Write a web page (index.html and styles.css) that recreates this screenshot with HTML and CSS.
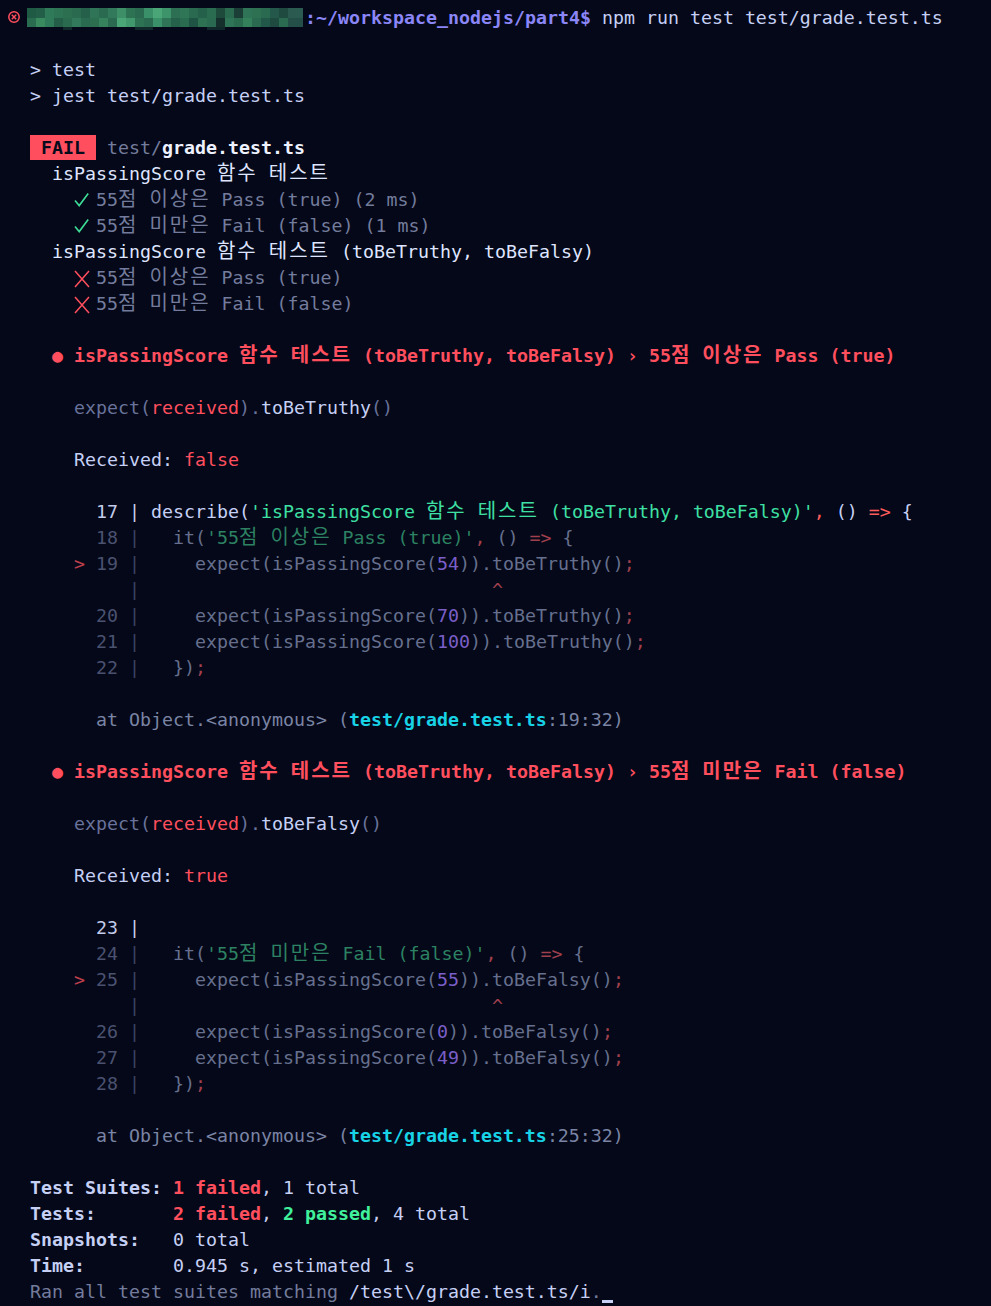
FILE: index.html
```html
<!DOCTYPE html>
<html lang="ko">
<head>
<meta charset="utf-8">
<title>jest</title>
<link rel="stylesheet" href="styles.css">
</head>
<body>
<div class="term">
<div class="ln"><span class="err"><svg width="14" height="14" viewBox="0 0 14 14"><circle cx="6" cy="7" r="5.2" fill="none" stroke="#ff4f5e" stroke-width="1.5"/><path d="M3.8 4.8 L8.2 9.2 M8.2 4.8 L3.8 9.2" stroke="#ff4f5e" stroke-width="1.4"/></svg></span><span class="blur"></span><span class="path">:~/workspace_nodejs/part4$</span> npm run test test/grade.test.ts</div>
<div class="ln"></div>
<div class="ln">  &gt; test</div>
<div class="ln">  &gt; jest test/grade.test.ts</div>
<div class="ln"></div>
<div class="ln">  <span class="badge"> FAIL </span> <span class="g1">test/</span><span class="b w">grade.test.ts</span></div>
<div class="ln">    <span class="desc">isPassingScore <span class="k">함수</span> <span class="k">테스트</span></span></div>
<div class="ln">      <span class="ico"><svg width="16" height="16" viewBox="0 0 16 16"><path d="M1 8.6 L5.2 13.6 L14.2 1.6" fill="none" stroke="#3ddc97" stroke-width="1.6"/></svg></span><span class="g1">55<span class="k">점</span> <span class="k">이상은</span> Pass (true) (2 ms)</span></div>
<div class="ln">      <span class="ico"><svg width="16" height="16" viewBox="0 0 16 16"><path d="M1 8.6 L5.2 13.6 L14.2 1.6" fill="none" stroke="#3ddc97" stroke-width="1.6"/></svg></span><span class="g1">55<span class="k">점</span> <span class="k">미만은</span> Fail (false) (1 ms)</span></div>
<div class="ln">    <span class="desc">isPassingScore <span class="k">함수</span> <span class="k">테스트</span> (toBeTruthy, toBeFalsy)</span></div>
<div class="ln">      <span class="ico"><svg width="16" height="18" viewBox="0 0 16 18"><path d="M1 1 L15 17 M15 1 L1 17" fill="none" stroke="#ff4f5e" stroke-width="1.5"/></svg></span><span class="g1">55<span class="k">점</span> <span class="k">이상은</span> Pass (true)</span></div>
<div class="ln">      <span class="ico"><svg width="16" height="18" viewBox="0 0 16 18"><path d="M1 1 L15 17 M15 1 L1 17" fill="none" stroke="#ff4f5e" stroke-width="1.5"/></svg></span><span class="g1">55<span class="k">점</span> <span class="k">미만은</span> Fail (false)</span></div>
<div class="ln"></div>
<div class="ln">    <span class="red b">● isPassingScore <span class="k">함수</span> <span class="k">테스트</span> (toBeTruthy, toBeFalsy) › 55<span class="k">점</span> <span class="k">이상은</span> Pass (true)</span></div>
<div class="ln"></div>
<div class="ln">      <span class="ed">expect(</span><span class="red">received</span><span class="ed">).</span>toBeTruthy<span class="ed">()</span></div>
<div class="ln"></div>
<div class="ln">      Received: <span class="red">false</span></div>
<div class="ln"></div>
<div class="ln">        <span class="nb">17 |</span> describe(<span class="cg">'isPassingScore <span class="k">함수</span> <span class="k">테스트</span> (toBeTruthy, toBeFalsy)'</span><span class="or">,</span> () <span class="or">=&gt;</span> {</div>
<div class="ln">        <span class="nd">18</span> <span class="bar">|</span> <span class="cd">  it(</span><span class="cs">'55<span class="k">점</span> <span class="k">이상은</span> Pass (true)'</span><span class="cr">,</span><span class="cd"> () </span><span class="cr">=&gt;</span><span class="cd"> {</span></div>
<div class="ln">      <span class="mk">&gt;</span> <span class="nd">19</span> <span class="bar">|</span> <span class="cd">    expect(isPassingScore(</span><span class="cn">54</span><span class="cd">)).toBeTruthy()</span><span class="cr">;</span></div>
<div class="ln">           <span class="bar">|</span>                                <span class="cr">^</span></div>
<div class="ln">        <span class="nd">20</span> <span class="bar">|</span> <span class="cd">    expect(isPassingScore(</span><span class="cn">70</span><span class="cd">)).toBeTruthy()</span><span class="cr">;</span></div>
<div class="ln">        <span class="nd">21</span> <span class="bar">|</span> <span class="cd">    expect(isPassingScore(</span><span class="cn">100</span><span class="cd">)).toBeTruthy()</span><span class="cr">;</span></div>
<div class="ln">        <span class="nd">22</span> <span class="bar">|</span> <span class="cd">  })</span><span class="cr">;</span></div>
<div class="ln"></div>
<div class="ln">        <span class="at">at Object.&lt;anonymous&gt; (</span><span class="cy">test/grade.test.ts</span><span class="at">:19:32)</span></div>
<div class="ln"></div>
<div class="ln">    <span class="red b">● isPassingScore <span class="k">함수</span> <span class="k">테스트</span> (toBeTruthy, toBeFalsy) › 55<span class="k">점</span> <span class="k">미만은</span> Fail (false)</span></div>
<div class="ln"></div>
<div class="ln">      <span class="ed">expect(</span><span class="red">received</span><span class="ed">).</span>toBeFalsy<span class="ed">()</span></div>
<div class="ln"></div>
<div class="ln">      Received: <span class="red">true</span></div>
<div class="ln"></div>
<div class="ln">        <span class="nb">23 |</span></div>
<div class="ln">        <span class="nd">24</span> <span class="bar">|</span> <span class="cd">  it(</span><span class="cs">'55<span class="k">점</span> <span class="k">미만은</span> Fail (false)'</span><span class="cr">,</span><span class="cd"> () </span><span class="cr">=&gt;</span><span class="cd"> {</span></div>
<div class="ln">      <span class="mk">&gt;</span> <span class="nd">25</span> <span class="bar">|</span> <span class="cd">    expect(isPassingScore(</span><span class="cn">55</span><span class="cd">)).toBeFalsy()</span><span class="cr">;</span></div>
<div class="ln">           <span class="bar">|</span>                                <span class="cr">^</span></div>
<div class="ln">        <span class="nd">26</span> <span class="bar">|</span> <span class="cd">    expect(isPassingScore(</span><span class="cn">0</span><span class="cd">)).toBeFalsy()</span><span class="cr">;</span></div>
<div class="ln">        <span class="nd">27</span> <span class="bar">|</span> <span class="cd">    expect(isPassingScore(</span><span class="cn">49</span><span class="cd">)).toBeFalsy()</span><span class="cr">;</span></div>
<div class="ln">        <span class="nd">28</span> <span class="bar">|</span> <span class="cd">  })</span><span class="cr">;</span></div>
<div class="ln"></div>
<div class="ln">        <span class="at">at Object.&lt;anonymous&gt; (</span><span class="cy">test/grade.test.ts</span><span class="at">:25:32)</span></div>
<div class="ln"></div>
<div class="ln">  <span class="b">Test Suites:</span> <span class="red b">1 failed</span>, 1 total</div>
<div class="ln">  <span class="b">Tests:</span>       <span class="red b">2 failed</span>, <span class="grn b">2 passed</span>, 4 total</div>
<div class="ln">  <span class="b">Snapshots:</span>   0 total</div>
<div class="ln">  <span class="b">Time:</span>        0.945 s, estimated 1 s</div>
<div class="ln">  <span class="g1">Ran all test suites matching </span>/test\/grade.test.ts/i<span class="g1">.</span><span class="cursor"></span></div>
</div>
</body>
</html>
```

FILE: styles.css
```css
html, body {
  margin: 0;
  background: #050818;
}

.term {
  padding: 5px 8px 0;
  height: 1301px;
  overflow: hidden;
  font-family: "DejaVu Sans Mono", "Noto Sans CJK KR", monospace;
  font-size: 18.27px;
  line-height: 26px;
  color: #c6d0f5;
}

.ln {
  height: 26px;
  white-space: pre;
}

.k {
  font-size: 20px;
  letter-spacing: 2px;
  line-height: 20px;
}

.b { font-weight: bold; }
.w { color: #eef1ff; }
.g1 { color: #737c9c; }
.desc { color: #dfe5ff; }
.red { color: #ff4f5e; }
.grn { color: #40f09c; }

.path {
  color: #8a86f7;
  font-weight: bold;
}

.err {
  display: inline-block;
  width: 19px;
  height: 26px;
  vertical-align: top;
}
.err svg {
  display: block;
  margin-top: 5px;
}

.blur {
  display: inline-block;
  width: 276px;
  height: 22px;
  margin-top: 3px;
  margin-right: 2px;
  vertical-align: top;
  background:
    linear-gradient(90deg,
      #1f5a44 0 9px, #235e48 9px 18px, #2f7a58 18px 27px, #2d7454 27px 36px,
      #2c6e50 36px 45px, #2a6a4e 45px 54px, #25604a 54px 63px, #2f7456 63px 72px,
      #2a6a50 72px 81px, #31795a 81px 90px, #3c8f66 90px 99px, #2e7254 99px 108px,
      #2a6a50 108px 117px, #3a9068 117px 126px, #4aa676 126px 135px, #3e946a 135px 144px,
      #2c6f52 144px 153px, #2f7657 153px 162px, #2a6a50 162px 171px, #24604a 171px 180px,
      #2a6c50 180px 189px, #1e4a3c 189px 198px, #2a6a4e 198px 207px, #1b3f36 207px 216px,
      #2f7456 216px 225px, #2d7052 225px 234px, #2a6a50 234px 243px, #24584a 243px 252px,
      #1f4a40 252px 261px, #2a5a50 261px 276px) top / 100% 10px no-repeat,
    linear-gradient(90deg,
      #2a6c50 0 9px, #3a8a60 9px 18px, #2f7a58 18px 27px, #245e48 27px 36px,
      #2a6a4e 36px 45px, #31795a 45px 54px, #2a6a50 54px 63px, #2c6e50 63px 72px,
      #36825c 72px 81px, #2a6a50 81px 90px, #4aa676 90px 99px, #40986c 99px 108px,
      #2e7254 108px 117px, #2a6a50 117px 126px, #3a9068 126px 135px, #2f7456 135px 144px,
      #24604a 144px 153px, #2a6c50 153px 162px, #1f5444 162px 171px, #2d7052 171px 180px,
      #2a6a50 180px 189px, #152f2c 189px 198px, #2f7456 198px 207px, #2a6a4e 207px 216px,
      #34805a 216px 225px, #2a6a50 225px 234px, #22584a 234px 243px, #1e4a40 243px 252px,
      #2a6a50 252px 261px, #244e48 261px 276px) 0 10px / 100% 9px no-repeat,
    linear-gradient(90deg,
      transparent 0 36px, #10282a 36px 45px, transparent 45px 108px, #10282a 108px 126px,
      transparent 126px 180px, #10282a 180px 198px, transparent 198px 276px) bottom / 100% 3px no-repeat;
}

.badge {
  display: inline-block;
  height: 25px;
  vertical-align: top;
  background: #ff4f5e;
  color: #080b1c;
  font-weight: bold;
}

.ico {
  display: inline-block;
  width: 22px;
  height: 26px;
  vertical-align: top;
}
.ico svg {
  display: block;
  margin-top: 5px;
}

.ed { color: #68729a; }

.nb { color: #c3cbea; }
.nd { color: #4a5270; }
.bar { color: #3a4262; }
.cd { color: #66708e; }
.cs { color: #2c8262; }
.cn { color: #7a5fc8; }
.cr { color: #a0404e; }
.cg { color: #3ee0a4; }
.or { color: #ff5c5c; }
.mk { color: #c0404c; }

.at { color: #7a84a4; }
.cy {
  color: #18d2e6;
  font-weight: bold;
}

.cursor {
  display: inline-block;
  width: 11px;
  height: 3px;
  vertical-align: -5px;
  background: #c6d0f5;
}
```
